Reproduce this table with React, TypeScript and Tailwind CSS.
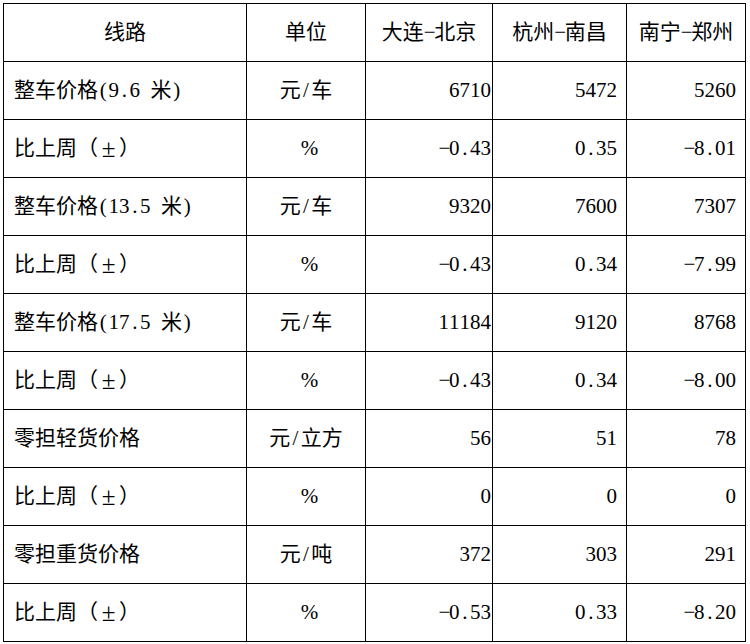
const header = ["线路", "单位", "大连-北京", "杭州-南昌", "南宁-郑州"];

const rows: string[][] = [
  ["整车价格(9.6 米)", "元/车", "6710", "5472", "5260"],
  ["比上周（±）", "%", "-0.43", "0.35", "-8.01"],
  ["整车价格(13.5 米)", "元/车", "9320", "7600", "7307"],
  ["比上周（±）", "%", "-0.43", "0.34", "-7.99"],
  ["整车价格(17.5 米)", "元/车", "11184", "9120", "8768"],
  ["比上周（±）", "%", "-0.43", "0.34", "-8.00"],
  ["零担轻货价格", "元/立方", "56", "51", "78"],
  ["比上周（±）", "%", "0", "0", "0"],
  ["零担重货价格", "元/吨", "372", "303", "291"],
  ["比上周（±）", "%", "-0.53", "0.33", "-8.20"],
];

const cell = "h-[58px] border-r border-b border-black flex items-center";
const numPad = ["", "", "pr-[1px]", "pr-[9px]", "pr-[9px]"];

// songti-style text: ascii glyphs take half an em, ± takes a full em
function Txt({ s }: { s: string }) {
  return (
    <>
      {Array.from(s).map((c, i) => {
        if (c === "±")
          return (
            <span
              key={i}
              className="inline-block w-[21px] text-center text-[25px] leading-none"
            >
              ±
            </span>
          );
        if (c.charCodeAt(0) < 128)
          return (
            <span key={i} className="inline-block w-[10.5px] text-center">
              {c === "-" ? "−" : c === " " ? "\u00a0" : c}
            </span>
          );
        return c;
      })}
    </>
  );
}

export default function App() {
  return (
    <div className="w-[750px] h-[644px] bg-white pl-[3px] pt-[3px] font-['Liberation_Serif','Noto_Sans_CJK_SC',serif] text-[21px] text-black">
      <div className="grid grid-cols-[243px_119px_127px_134px_119px] w-[743px] border-l border-t border-black">
        {header.map((h) => (
          <div key={h} className={`${cell} justify-center`}>
            <Txt s={h} />
          </div>
        ))}
        {rows.map((r, i) =>
          r.map((v, j) => (
            <div
              key={i + "-" + j}
              className={
                j === 0
                  ? `${cell} pl-[10px]`
                  : j === 1
                  ? `${cell} justify-center`
                  : `${cell} justify-end ${numPad[j]}`
              }
            >
              <Txt s={v} />
            </div>
          ))
        )}
      </div>
    </div>
  );
}
